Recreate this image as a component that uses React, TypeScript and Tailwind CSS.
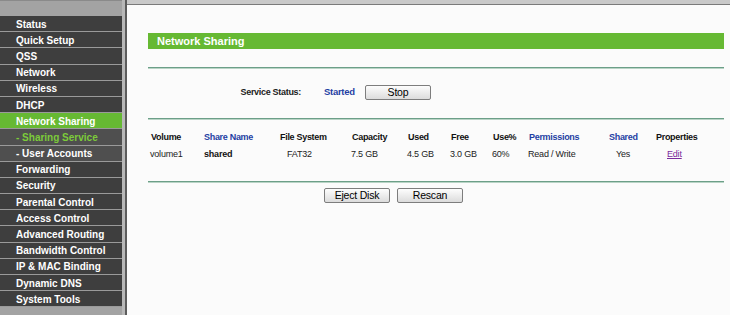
import React from "react";

const menu = [
  { label: "Status" },
  { label: "Quick Setup" },
  { label: "QSS" },
  { label: "Network" },
  { label: "Wireless" },
  { label: "DHCP" },
  { label: "Network Sharing", active: true },
  { label: "- Sharing Service", sub: true, current: true },
  { label: "- User Accounts", sub: true },
  { label: "Forwarding" },
  { label: "Security" },
  { label: "Parental Control" },
  { label: "Access Control" },
  { label: "Advanced Routing" },
  { label: "Bandwidth Control" },
  { label: "IP & MAC Binding" },
  { label: "Dynamic DNS" },
  { label: "System Tools" },
];

function Sidebar() {
  return (
    <div className="flex h-full shrink-0">
      <div className="flex w-[122px] flex-col bg-[#a3a3a3]">
        <div className="h-[16px] border-t border-[#8a8a8a]" />
        {menu.map((m) => {
          let cls = "bg-[#3e3e3e] text-white pl-[16px]";
          if (m.active) cls = "bg-[#66b933] text-white pl-[16px]";
          else if (m.sub && m.current) cls = "bg-[#4f4f4f] text-[#7ccb3a] pl-[16px]";
          else if (m.sub) cls = "bg-[#4f4f4f] text-white pl-[16px]";
          return (
            <div
              key={m.label}
              className={`flex h-[16.2px] items-center border-b border-[#9a9a9a] pt-[2px] text-[10px] font-bold leading-none ${cls}`}
            >
              {m.label}
            </div>
          );
        })}
        <div className="flex-1" />
      </div>
      <div className="w-[3px] bg-[#b8b8b8]" />
      <div className="w-[2px] bg-[#5c5c5c]" />
    </div>
  );
}

function Btn({ children }: { children: React.ReactNode }) {
  return (
    <button className="h-[15px] w-[66px] rounded-[2px] border border-[#7d7d7d] bg-gradient-to-b from-[#fdfdfd] to-[#dcdcdc] text-[10.5px] font-normal leading-none tracking-[-0.2px] text-black">
      {children}
    </button>
  );
}

const cols = "grid grid-cols-[53px_76px_72px_56px_43px_42px_36px_80px_47px_68px]";

export default function App() {
  return (
    <div
      className="flex h-[315px] w-[730px] overflow-hidden bg-white"
      style={{ fontFamily: '"Liberation Sans", Arial, sans-serif' }}
    >
      <Sidebar />
      <div className="flex-1 border-t-[4px] border-t-[#c9c9c9] bg-[#fbfbfb]">
        <div className="h-px bg-[#7a7a7a]" />
        <div className="ml-[21px] w-[576px]">
          <div className="mt-[28px] flex h-[16px] items-center bg-[#66b933] pl-[9px] text-[11px] font-bold text-white">
            Network Sharing
          </div>
          <div className="mt-[18px] h-[2px] border-b border-[#b9d4c6] bg-[#6c9f88]" />
          <div className="mt-[16px] flex h-[15px] items-center text-[9px] font-bold tracking-[-0.3px]">
            <span className="w-[153px] text-right text-[#222]">Service Status:</span>
            <span className="ml-[23px] w-[41px] text-[9.5px] text-[#1f3fa3]">Started</span>
            <Btn>Stop</Btn>
          </div>
          <div className="mt-[18px] h-[2px] border-b border-[#b9d4c6] bg-[#6c9f88]" />
          <div className={`${cols} mt-[11px] h-[12px] items-center pl-[3px] text-[9px] font-bold leading-none tracking-[-0.3px] text-[#111]`}>
            <span>Volume</span>
            <span className="text-[#1f3fa3]">Share Name</span>
            <span>File System</span>
            <span>Capacity</span>
            <span>Used</span>
            <span>Free</span>
            <span>Use%</span>
            <span className="text-[#1f3fa3]">Permissions</span>
            <span className="text-[#1f3fa3]">Shared</span>
            <span>Properties</span>
          </div>
          <div className={`${cols} mt-[5px] h-[12px] items-center pl-[2px] text-[9px] leading-none tracking-[-0.2px] text-[#222]`}>
            <span>volume1</span>
            <span className="pl-[1px] font-bold text-[#111]">shared</span>
            <span className="pl-[8px]">FAT32</span>
            <span>7.5 GB</span>
            <span>4.5 GB</span>
            <span>3.0 GB</span>
            <span>60%</span>
            <span>Read / Write</span>
            <span className="pl-[8px]">Yes</span>
            <span className="pl-[12px] text-[#7b2c9e] underline">Edit</span>
          </div>
          <div className="mt-[21px] h-[2px] border-b border-[#b9d4c6] bg-[#6c9f88]" />
          <div className="mt-[5px] flex gap-[7px] pl-[176px]">
            <Btn>Eject Disk</Btn>
            <Btn>Rescan</Btn>
          </div>
        </div>
      </div>
    </div>
  );
}
